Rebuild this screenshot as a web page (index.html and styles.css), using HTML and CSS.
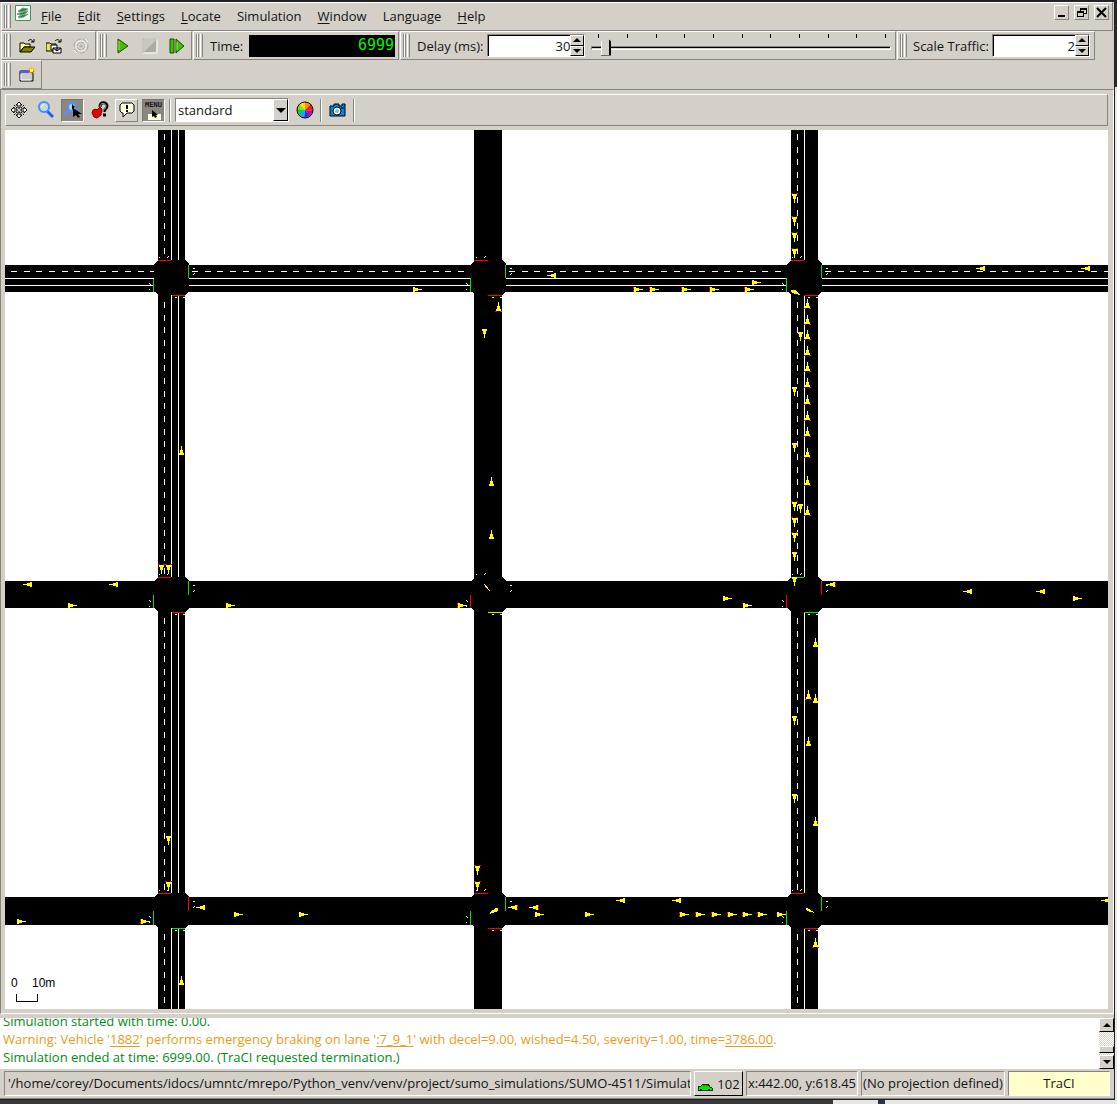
FILE: index.html
```html
<!DOCTYPE html>
<html lang="en">
<head>
<meta charset="utf-8">
<title>SUMO simulation</title>
<link rel="stylesheet" href="styles.css">
</head>
<body>
<div class="desktop">
<div class="window">
  <header class="menubar">
    <span class="grip"></span>
    <svg class="logo" viewBox="0 0 16 16" width="16" height="16"><path fill="#fff" stroke="#3c9a58" d="M.5.5h15v15H.5z"/><path d="M3 6l5-3 5 1-3 2-6 1zM2 9l6-2 5-1-3 3-5 1zM3 12l4-2 6-1-4 3-5 1z" fill="#2e7d4a" stroke="#69a97d"/></svg>
    <nav class="menus">
      <button class="menu"><u>F</u>ile</button><button class="menu"><u>E</u>dit</button><button class="menu"><u>S</u>ettings</button><button class="menu"><u>L</u>ocate</button><button class="menu">Simulation</button><button class="menu"><u>W</u>indow</button><button class="menu">Langua<u>g</u>e</button><button class="menu"><u>H</u>elp</button>
    </nav>
    <div class="controls">
      <button class="control" aria-label="Minimize"><svg viewBox="0 0 13 13" width="13" height="13"><path d="M3 9h7v2H3z"/></svg></button>
      <button class="control" aria-label="Restore"><svg viewBox="0 0 13 13" width="13" height="13"><path d="M5 2h7v6H9V7h2V4H6v1H5zM2 5h7v6H2zm1 2v3h5V7z" fill-rule="evenodd"/></svg></button>
      <button class="control" aria-label="Close"><svg viewBox="0 0 13 13" width="13" height="13"><path d="M2 2l9 9M11 2l-9 9" stroke="#000" stroke-width="2"/></svg></button>
    </div>
  </header>

  <div class="toolrow">
    <div class="dock files">
      <span class="grip"></span>
      <button class="tool" aria-label="Open simulation"><svg viewBox="0 0 16 16" width="16" height="16"><path d="M1 5h4l1 1h5v3H5l-4 5z" fill="#ffff80" stroke="#000"/><path d="M1 14l4-5h11l-4 5z" fill="#848000" stroke="#000"/><path d="M9 3c2-2 4-2 5 1m-2 0h3V1" fill="none" stroke="#000"/></svg></button>
      <button class="tool" aria-label="Open network"><svg viewBox="0 0 16 16" width="16" height="16"><path d="M0 5h4l1 1h5v7H0z" fill="#e8e060" stroke="#000"/><path d="M5 7h6v5H5z" fill="#fff" stroke="#000"/><path d="M7 10h8v5H7zm0 0l4 3 4-3" fill="#fff" stroke="#000"/><path d="M9 3c2-2 4-2 5 1m-2 0h3V1" fill="none" stroke="#000"/></svg></button>
      <button class="tool" aria-label="Reload" disabled><svg viewBox="0 0 16 16" width="16" height="16" fill="none" stroke="#aaa7a0"><circle cx="8" cy="8" r="7" stroke-dasharray="5 2"/><circle cx="8" cy="8" r="5" stroke="#fff"/><circle cx="8" cy="8" r="4" stroke-dasharray="5 1"/><circle cx="8" cy="8" r="1"/><path d="M12 1l3 3M1 12l3 3" stroke="#fff"/></svg></button>
    </div>
    <div class="dock files">
      <span class="grip"></span>
      <button class="tool" aria-label="Run"><svg viewBox="0 0 16 16" width="16" height="16"><path d="M3 1l10 7-10 7z" fill="#48bd00" stroke="#164b00"/><path d="M4 3v9" stroke="#8ef03c"/></svg></button>
      <button class="tool" aria-label="Stop" disabled><svg viewBox="0 0 16 16" width="16" height="16"><path d="M1 1h14v14H1z" fill="#c9c6c0" stroke="#fff"/><path d="M14 2v12H2z" fill="#aeaba5"/><path d="M1 15V1h14" fill="none" stroke="#aaa7a0"/></svg></button>
      <button class="tool" aria-label="Step"><svg viewBox="0 0 16 16" width="16" height="16"><path d="M1 1h4v14H1zM7 1l8 7-8 7z" fill="#48bd00" stroke="#164b00"/><path d="M8 4v8" stroke="#8ef03c"/></svg></button>
    </div>
    <div class="dock time">
      <span class="grip"></span>
      <label for="clock">Time:</label>
      <output class="lcd" id="clock">6999</output>
    </div>
    <div class="dock delay">
      <span class="grip"></span>
      <label for="delay">Delay (ms):</label>
      <div class="spin"><input id="delay" type="text" value="30"><span class="arrows"><button class="up" aria-label="Increase delay"></button><button class="down" aria-label="Decrease delay"></button></span></div>
      <div class="slider">
        <div class="ticks"><i></i><i></i><i></i><i></i><i></i><i></i><i></i><i></i><i></i><i></i><i></i></div>
        <input type="range" min="0" max="1000" value="30" aria-label="Delay">
      </div>
    </div>
    <div class="dock scale">
      <span class="grip"></span>
      <label for="scale">Scale Traffic:</label>
      <div class="spin"><input id="scale" type="text" value="2"><span class="arrows"><button class="up" aria-label="Increase scale"></button><button class="down" aria-label="Decrease scale"></button></span></div>
    </div>
  </div>

  <div class="toolrow">
    <div class="dock single">
      <span class="grip"></span>
      <button class="tool" aria-label="New view"><svg viewBox="0 0 16 16" width="16" height="16"><path d="M1 4h13v10H1z" fill="#ccc" stroke="#000"/><path d="M1 4h12v2H1z" fill="#4c5cff"/><path d="M2 7v6h10" fill="none" stroke="#fff"/><path d="M12 0v7M9 3h7M10 1l5 5M15 1l-5 5" stroke="#ffa000"/><path d="M11 2h3v3h-3z" fill="#ff0"/></svg></button>
    </div>
  </div>

  <main class="workspace">
    <div class="viewbar">
      <button class="tool" aria-label="Recenter"><svg viewBox="0 0 18 18" width="18" height="18" fill="#fff" stroke="#000"><path d="M9 1l3 3h-2v3H8V4H6zM9 17l3-3h-2v-3H8v3H6zM1 9l3-3v2h3v2H4v2zM17 9l-3-3v2h-3v2h3v2z"/><path d="M4 4l3 3M14 4l-3 3M4 14l3-3M14 14l-3-3" stroke-dasharray="2 1"/></svg></button>
      <button class="tool" aria-label="Zoom"><svg viewBox="0 0 18 18" width="18" height="18"><path d="M10 10l6 6" stroke="#2463e8" stroke-width="3"/><circle cx="7" cy="6" r="5" fill="#c8dce8" stroke="#438cff" stroke-width="2"/><path d="M4 6l3-3" stroke="#fff"/></svg></button>
      <button class="tool pressed" aria-label="Zoom style"><svg viewBox="0 0 18 18" width="18" height="18"><path d="M6 9l-5 5" stroke="#4c94ff" stroke-width="3"/><circle cx="8" cy="6" r="4" fill="#b9cfe0" stroke="#4c94ff" stroke-width="2"/><path d="M8 3l3 3-3 3z"/><path d="M9 7v9l3-2 2 3 2-1-2-3h4z"/></svg></button>
      <button class="tool" aria-label="Locator"><svg viewBox="0 0 18 18" width="18" height="18"><path d="M9 6c0-6 7-5 7-1 0 3-3 3-3 6M12 14h3" fill="none" stroke="#000" stroke-width="3"/><path d="M9 6c0-5 6-4 6-1 0 3-3 3-3 6" fill="none" stroke="#aaa"/><path d="M2 9l3-1 1 1 3-3 2 2-1 6-4 3-3-1-2-4z" fill="#f00000" stroke="#800000"/></svg></button>
      <button class="tool raised" aria-label="Tooltips"><svg viewBox="0 0 18 18" width="18" height="18"><path d="M4 2h10l2 2v6l-2 2H9l-4 4v-4H4l-2-2V4z" fill="#ffffe1" stroke="#000"/><path d="M8 4h2v4H8zM8 9h2v2H8z"/></svg></button>
      <button class="tool pressed menuicon" aria-label="Menu"><span>MENU</span><svg viewBox="0 0 18 10" width="18" height="10"><path d="M3 4h13v6H3z" fill="#ffffe1"/><path d="M7 0v7l2-1 1 2 2-1-1-2h2z"/></svg></button>
      <span class="sep"></span>
      <div class="combo"><select aria-label="Color scheme"><option>standard</option></select><span class="drop"></span></div>
      <button class="tool" aria-label="Edit coloring"><svg viewBox="0 0 18 18" width="18" height="18"><path d="M9 9V1l6 2z" fill="#ff9000"/><path d="M9 9L9 1 3 3z" fill="#ffe000"/><path d="M9 9l6-6 2 7z" fill="#f02000"/><path d="M9 9l8 1-3 5z" fill="#d000b0"/><path d="M9 9l5 6-6 2z" fill="#2030ff"/><path d="M9 9l-1 8-6-4z" fill="#00b0e0"/><path d="M9 9l-7 4-1-5z" fill="#00d050"/><path d="M9 9L1 8l2-5z" fill="#90e000"/><circle cx="9" cy="9" r="8" fill="none" stroke="#000"/></svg></button>
      <span class="sep"></span>
      <button class="tool" aria-label="Snapshot"><svg viewBox="0 0 18 18" width="18" height="18"><path d="M1 5h4V3h5v2h3V3h3v12H1z" fill="#0088e8" stroke="#000"/><circle cx="8" cy="10" r="4" fill="#fff" stroke="#000"/><circle cx="8" cy="10" r="2" fill="#60c8ff"/><path d="M12 6h3v2h-3z" fill="#003878"/></svg></button>
      <span class="sep"></span>
    </div>

    <svg class="map" viewBox="5 130 1103 879" preserveAspectRatio="xMinYMin slice" shape-rendering="crispEdges" role="img" aria-label="Road network">
      <defs>
        <path id="s" d="M-2-4H3v2H2v3H1v4H0V1h-1v-3h-1z"/>
        <path id="n" d="M0-5h1v4h1v3h1v2h-5V2h1v-3h1z"/>
        <path id="e" d="M-5-2h2v1h3v1h4v1H0v1h-3v1h-2z"/>
        <path id="w" d="M5-2H3v1H0v1h-4v1h4v1h3v1h2z"/>
        <g id="sr"><use href="#s"/><path fill="red" d="M-3-5h2v1h-2zM2-5h2v1H2z"/></g>
        <g id="nr"><use href="#n"/><path fill="red" d="M-3 4h2v1h-2zM2 4h2v1H2z"/></g>
        <g id="er"><use href="#e"/><path fill="red" d="M-6-2h1v2h-1zM-6 1h1v2h-1z"/></g>
        <g id="wr"><use href="#w"/><path fill="red" d="M5-2h1v2H5zM5 1h1v2H5z"/></g>
        <path id="junction" d="M-13-18h27l4 4v27l-4 4h-27l-4-4v-27z"/>
        <path id="marks" fill="#fff" d="M-12-21h1v1h-1zM-4-21h1v1h-1zM-3-22h1v1h-1zM-22 5h1v1h-1zM-21 6h1v1h-1zM-22 11h1v1h-1zM4 19h2v1H4zM12 19h2v1h-2zM22-10h2v1h-2zM22-4h1v1h-1zM23-5h1v1h-1z"/>
      </defs>
      <path fill="#fff" d="M5 130h1103v879H5z"/>
      <path d="M158 130h27v879h-27zM474 130h28v879h-28zM791 130h27v879h-27zM5 265h1103v27H5zM5 581h1103v27H5zM5 897h1103v28H5z"/>
      <path fill="#fff" d="M171 130h1v879h-1zM178 130h1v879h-1zM804 130h1v879h-1zM5 278h1103v1H5zM5 285h1103v1H5z"/>
      <g fill="none" stroke="#fff" stroke-dasharray="6 7 6 6 6 7">
        <path d="M164.500 134V260M164.500 302V577M164.500 618V893M164.500 934V1009M797.500 134V260M797.500 302V577M797.500 618V893M797.500 934V1009"/>
        <path d="M11 271.500H154M192 271.500H470M509 271.500H786M825 271.500H1108"/>
      </g>
      <path d="M5 581h1103v27H5zM5 897h1103v28H5zM474 130h28v879h-28z"/>
      <use href="#junction" x="171" y="278"/><use href="#junction" x="488" y="278"/><use href="#junction" x="804" y="278"/>
      <use href="#junction" x="171" y="595"/><use href="#junction" x="488" y="595"/><use href="#junction" x="804" y="595"/>
      <use href="#junction" x="171" y="911"/><use href="#junction" x="488" y="911"/><use href="#junction" x="804" y="911"/>
      <use href="#marks" x="171" y="278"/><use href="#marks" x="488" y="278"/><use href="#marks" x="804" y="278"/>
      <use href="#marks" x="171" y="595"/><use href="#marks" x="488" y="595"/><use href="#marks" x="804" y="595"/>
      <use href="#marks" x="171" y="911"/><use href="#marks" x="488" y="911"/><use href="#marks" x="804" y="911"/>
      <path fill="red" d="M158 260h13v1h-13zM172 295h13v1h-13zM474 260h14v1h-14zM488 295h14v1h-14zM791 260h13v1h-13zM804 295h14v1h-14zM158 577h13v1h-13zM172 612h13v1h-13zM470 595h1v13h-1zM786 595h1v13h-1zM821 581h1v14h-1zM158 893h13v1h-13zM188 897h1v14h-1zM474 893h14v1h-14zM488 928h14v1h-14zM791 893h13v1h-13zM804 928h14v1h-14z"/>
      <path fill="#00e000" d="M188 265h1v13h-1zM153 279h1v13h-1zM505 265h1v13h-1zM470 278h1v14h-1zM821 265h1v13h-1zM786 278h1v14h-1zM188 581h1v14h-1zM153 595h1v13h-1zM791 577h13v1h-13zM804 612h14v1h-14zM153 911h1v14h-1zM172 928h13v1h-13zM505 897h1v14h-1zM470 911h1v14h-1zM821 897h1v14h-1zM786 911h1v14h-1z"/>
      <path fill="#e0e000" d="M488 612h14v1h-14z"/>
      <g fill="#ff0">
        <use href="#sr" x="794" y="198"/><use href="#sr" x="794" y="221"/><use href="#sr" x="794" y="237"/><use href="#sr" x="794" y="253"/>
        <use href="#nr" x="807" y="304"/><use href="#nr" x="807" y="320"/><use href="#nr" x="807" y="335"/><use href="#nr" x="807" y="351"/><use href="#nr" x="807" y="367"/><use href="#nr" x="807" y="383"/><use href="#nr" x="807" y="400"/><use href="#nr" x="807" y="416"/><use href="#nr" x="807" y="432"/><use href="#nr" x="807" y="453"/><use href="#nr" x="807" y="481"/><use href="#nr" x="807" y="511"/>
        <use href="#s" x="800" y="336"/><use href="#s" x="794" y="391"/><use href="#s" x="794" y="447"/><use href="#sr" x="794" y="506"/><use href="#s" x="800" y="508"/><use href="#sr" x="794" y="522"/><use href="#sr" x="794" y="537"/><use href="#s" x="794" y="556"/><use href="#s" x="794" y="581"/>
        <use href="#n" x="815" y="643"/><use href="#nr" x="808" y="695"/><use href="#n" x="815" y="699"/><use href="#s" x="794" y="720"/><use href="#n" x="808" y="742"/><use href="#s" x="794" y="798"/><use href="#n" x="815" y="822"/><use href="#nr" x="815" y="943"/>
        <use href="#nr" x="498" y="307"/><use href="#s" x="484" y="333"/><use href="#n" x="491" y="482"/><use href="#n" x="491" y="535"/><use href="#sr" x="477" y="870"/><use href="#sr" x="477" y="886"/>
        <use href="#n" x="181" y="451"/><use href="#sr" x="161" y="569"/><use href="#sr" x="168" y="569"/><use href="#s" x="168" y="840"/><use href="#sr" x="168" y="886"/><use href="#n" x="181" y="981"/>
        <use href="#w" x="551" y="275"/><use href="#w" x="980" y="268"/><use href="#w" x="1085" y="268"/><use href="#e" x="418" y="289"/><use href="#er" x="639" y="289"/><use href="#er" x="655" y="289"/><use href="#er" x="687" y="289"/><use href="#er" x="715" y="289"/><use href="#er" x="750" y="289"/><use href="#e" x="757" y="282"/>
        <use href="#w" x="27" y="584"/><use href="#w" x="113" y="584"/><use href="#e" x="73" y="605"/><use href="#e" x="231" y="605"/><use href="#er" x="463" y="605"/><use href="#e" x="728" y="598"/><use href="#e" x="748" y="605"/><use href="#wr" x="830" y="584"/><use href="#w" x="967" y="591"/><use href="#w" x="1040" y="591"/><use href="#e" x="1078" y="598"/>
        <use href="#w" x="200" y="907"/><use href="#e" x="22" y="921"/><use href="#er" x="146" y="921"/><use href="#e" x="239" y="914"/><use href="#e" x="304" y="914"/><use href="#wr" x="512" y="907"/><use href="#wr" x="533" y="907"/><use href="#e" x="540" y="914"/><use href="#e" x="590" y="914"/><use href="#w" x="620" y="900"/><use href="#w" x="676" y="900"/><use href="#er" x="685" y="914"/><use href="#er" x="701" y="914"/><use href="#er" x="717" y="914"/><use href="#er" x="733" y="914"/><use href="#er" x="748" y="914"/><use href="#er" x="763" y="914"/><use href="#e" x="782" y="914"/><use href="#w" x="1105" y="900"/>
        <path d="M791 290h4l5 5-8-2zM484 584l3 2 4 7-5-5zM489 913l7-5h2v3l-8 3zM806 908l3 1 6 4-8-2z"/>
      </g>
      <path fill="none" stroke="#000" d="M16.500 994v7.500h21V994"/>
      <g class="ruler"><text x="11" y="987">0</text><text x="32" y="987">10m</text></g>
    </svg>
  </main>

  <section class="messages">
    <div class="log">
      <p>Simulation started with time: 0.00.</p>
      <p class="warning">Warning: Vehicle '<a href="#1882">1882</a>' performs emergency braking on lane '<a href="#lane">:7_9_1</a>' with decel=9.00, wished=4.50, severity=1.00, time=<a href="#3786">3786.00</a>.</p>
      <p>Simulation ended at time: 6999.00. (TraCI requested termination.)</p>
    </div>
    <div class="scrollbar"><button class="up" aria-label="Scroll up"></button><span class="thumb"></span><button class="down" aria-label="Scroll down"></button></div>
  </section>

  <footer class="statusbar">
    <div class="cell path">'/home/corey/Documents/idocs/umntc/mrepo/Python_venv/venv/project/sumo_simulations/SUMO-4511/Simulation</div>
    <button class="count"><svg viewBox="0 0 16 8" width="16" height="8" shape-rendering="crispEdges"><path d="M1 4l3-1 2-2h5l2 3 2 1v2H1z" fill="#00e800" stroke="#004000"/><path d="M6 2h2v1H6zM9 2h2v1H9z" fill="#a04000"/><path d="M3 6h2v2H3zM11 6h2v2h-2z"/></svg>102</button>
    <div class="cell coords">x:442.00, y:618.45</div>
    <div class="cell projection">(No projection defined)</div>
    <div class="cell traci">TraCI</div>
  </footer>
</div>
</div>
</body>
</html>
```
FILE: styles.css
```css
* { box-sizing: border-box; }

:root {
  --face: #d4d0c8;
  --shade: #868380;
}

body {
  margin: 0;
  background: #2b2828;
  color: #141414;
  font: 13px/18px "Open Sans", "Noto Sans", sans-serif;
}

button, input, select { font: inherit; color: inherit; margin: 0; }
button { padding: 0; border: 0; background: var(--face); }
svg { display: block; flex: none; }

.desktop {
  height: 100vh;
  padding: 2px 3px 5px 0;
  background:
    linear-gradient(#2b2828 87px, #e8e8e8 87px) right top / 2px 1100px no-repeat,
    linear-gradient(90deg, #38373a 833px, #e6e6e6 833px, #e6e6e6 878px, #2a3448 878px, #2a3448 885px, #e6e6e6 885px) left bottom / 100% 4px no-repeat,
    #222;
}

.window {
  display: flex;
  flex-direction: column;
  height: 100%;
  background: var(--face);
  border-bottom: 1px solid var(--shade);
}

.menubar {
  display: flex;
  align-items: center;
  height: 29px;
  margin: 0 1px;
  padding: 0 3px 0 2px;
  border: solid;
  border-width: 1px;
  border-color: #fff var(--shade) var(--shade) #fff;
}

.grip {
  flex: none;
  width: 7px;
  height: 23px;
  border: solid;
  border-width: 0 1px;
  border-color: #fff var(--shade);
  background: linear-gradient(90deg, #fff 1px, var(--shade) 1px 2px, var(--face) 2px 3px, #fff 3px 4px, var(--face) 4px);
}

.logo { margin: 0 10px 8px 4px; }
.menus { display: flex; gap: 16px; padding-bottom: 2px; }
.menu u { text-underline-offset: 2px; }

.controls {
  display: flex;
  gap: 5px;
  margin: 0 0 8px auto;
}

.control {
  width: 15px;
  height: 15px;
  border: 1px solid;
  border-color: #fff var(--shade) var(--shade) #fff;
}

.toolrow { display: flex; gap: 1px; margin: 0 1px; padding-right: 18px; }

.dock {
  display: flex;
  align-items: center;
  height: 29px;
  padding-left: 2px;
  border: 1px solid;
  border-color: #fff var(--shade) var(--shade) #fff;
}

.tool {
  display: flex;
  flex: none;
  align-items: center;
  justify-content: center;
  width: 23px;
  height: 23px;
  background: none;
}

.files { flex: none; width: 95px; gap: 4px; }
.time { flex: none; width: 206px; }
.time label { margin-left: 7px; }
.delay { flex: 1; }
.delay label { margin-left: 7px; }
.scale { flex: none; width: 198px; }
.scale label { margin-left: 6px; }
.single { width: 41px; gap: 4px; }

.lcd {
  width: 146px;
  height: 22px;
  margin-left: auto;
  margin-right: 3px;
  padding-right: 1px;
  background: #000;
  color: #00f400;
  font: 15px/20px "DejaVu Sans Mono", monospace;
  text-align: right;
}

.spin {
  display: flex;
  width: 98px;
  height: 23px;
  margin-left: 4px;
  border: 1px solid;
  border-color: var(--shade) #fff #fff var(--shade);
  background: #fff;
}

.scale .spin { margin-left: auto; margin-right: 4px; }

.spin input {
  flex: 1;
  min-width: 0;
  padding: 0;
  border: solid #000;
  border-width: 1px 0 0 1px;
  outline: 0;
  background: #fff;
  text-align: right;
}

.arrows { display: flex; flex-direction: column; width: 14px; }

.up, .down {
  display: flex;
  flex: 1;
  align-items: center;
  justify-content: center;
  border: 1px solid;
  border-color: #fff #000 #000 #fff;
}

.up::before, .down::before {
  content: "";
  border: 4px solid transparent;
  border-top-width: 0;
  border-bottom: 4px solid #000;
}

.down::before { transform: rotate(180deg); }

.slider { flex: 1; margin: 0 4px 0 6px; }

.ticks {
  display: flex;
  justify-content: space-between;
  height: 4px;
  margin: 0 5px 0 7px;
}

.ticks i { width: 1px; background: #000; }

.slider input {
  display: block;
  width: 100%;
  height: 19px;
  appearance: none;
  background: none;
}

.slider input::-webkit-slider-runnable-track {
  height: 4px;
  border: 1px solid;
  border-color: var(--shade) #fff #fff var(--shade);
  background: linear-gradient(#000 1px, var(--face) 1px);
}

.slider input::-webkit-slider-thumb {
  width: 10px;
  height: 19px;
  margin-top: -10px;
  appearance: none;
  background: linear-gradient(90deg, #fff 1px, var(--face) 1px 8px, #000 8px);
  border-bottom: 1px solid #000;
  clip-path: polygon(0 5px, 5px 0, 10px 5px, 10px 100%, 0 100%);
}

.workspace {
  display: flex;
  flex: 1;
  flex-direction: column;
  min-height: 0;
  padding: 4px 5px 4px 4px;
  border: solid;
  border-width: 1px;
  border-color: var(--shade) #fff #fff var(--shade);
}

.viewbar {
  display: flex;
  flex: none;
  align-items: center;
  gap: 4px;
  height: 32px;
  margin-bottom: 4px;
  padding-left: 1px;
  border: 1px solid;
  border-color: #fff var(--shade) var(--shade) #fff;
}

.pressed {
  background: #8a8781;
  border: 1px solid;
  border-color: #777 #fff #fff #777;
}

.raised {
  border: 1px solid;
  border-color: #fff var(--shade) var(--shade) #fff;
}

.menuicon { flex-direction: column; font: bold 7px/9px "DejaVu Sans Mono", monospace; }

.sep {
  width: 2px;
  height: 23px;
  border-left: 1px solid var(--shade);
  border-right: 1px solid #fff;
}

.combo { position: relative; width: 114px; height: 24px; }

.combo select {
  width: 100%;
  height: 100%;
  padding: 0 2px;
  appearance: none;
  border: 1px solid;
  border-color: var(--shade) #fff #fff var(--shade);
  border-radius: 0;
  background: #fff;
}

.drop {
  position: absolute;
  top: 1px;
  right: 1px;
  bottom: 1px;
  display: flex;
  align-items: center;
  justify-content: center;
  width: 15px;
  border: 1px solid;
  border-color: #fff #000 #000 #fff;
  background: var(--face);
  pointer-events: none;
}

.drop::before {
  content: "";
  border: 5px solid transparent;
  border-top-color: #000;
  border-bottom-width: 0;
}

.map { flex: 1; width: 100%; min-height: 0; background: #fff; }
.ruler { font: 12px "Liberation Sans", sans-serif; }

.messages {
  display: flex;
  flex: none;
  height: 51px;
  margin-top: 4px;
  background: #fff;
}

.log {
  display: flex;
  flex: 1;
  flex-direction: column;
  justify-content: flex-end;
  min-width: 0;
  padding: 0 3px 3px;
  overflow: hidden;
  color: #008c14;
  white-space: nowrap;
}

.log p { margin: 0; }
.log .warning { color: #e89c18; }
.log a { color: inherit; text-underline-offset: 2px; }

.scrollbar {
  display: flex;
  flex-direction: column;
  width: 15px;
  background: repeating-conic-gradient(#fff 0 25%, var(--face) 0 50%) 0 0 / 2px 2px;
}

.scrollbar .up, .scrollbar .down { flex: none; height: 14px; }

.thumb {
  height: 7px;
  margin: auto 0 2px;
  border: 1px solid;
  border-color: #fff #000 #000 #fff;
  background: var(--face);
}

.statusbar {
  display: flex;
  flex: none;
  align-items: center;
  gap: 3px;
  height: 29px;
  padding: 0 4px;
  white-space: nowrap;
}

.cell {
  height: 25px;
  padding: 2px 0;
  border: 1px solid;
  border-color: var(--shade) #fff #fff var(--shade);
  overflow: hidden;
  text-align: center;
}

.path { flex: 1; min-width: 0; padding: 2px 3px; text-align: left; }
.coords { flex: none; width: 112px; }
.projection { flex: none; width: 144px; }
.traci { flex: none; width: 102px; background: #ffffcc; }

.count {
  display: flex;
  flex: none;
  align-items: center;
  justify-content: center;
  gap: 4px;
  width: 49px;
  height: 25px;
  border: 1px solid;
  border-color: #fff #000 #000 #fff;
}

.count svg { margin-top: 6px; }
```
